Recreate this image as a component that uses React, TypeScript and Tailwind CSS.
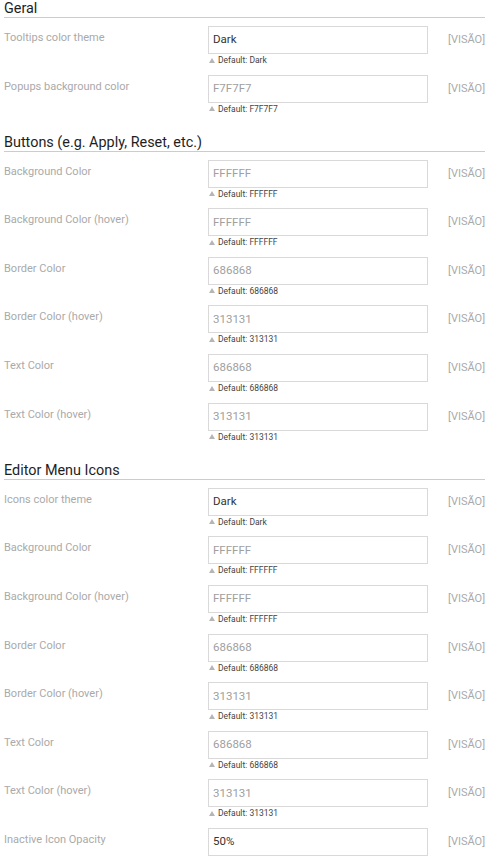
type Field = {
  label: string
  value: string
  def?: string
  dark?: boolean
}

type Section = {
  title: string
  fields: Field[]
}

const sections: Section[] = [
  {
    title: 'Geral',
    fields: [
      { label: 'Tooltips color theme', value: 'Dark', def: 'Dark', dark: true },
      { label: 'Popups background color', value: 'F7F7F7', def: 'F7F7F7' },
    ],
  },
  {
    title: 'Buttons (e.g. Apply, Reset, etc.)',
    fields: [
      { label: 'Background Color', value: 'FFFFFF', def: 'FFFFFF' },
      { label: 'Background Color (hover)', value: 'FFFFFF', def: 'FFFFFF' },
      { label: 'Border Color', value: '686868', def: '686868' },
      { label: 'Border Color (hover)', value: '313131', def: '313131' },
      { label: 'Text Color', value: '686868', def: '686868' },
      { label: 'Text Color (hover)', value: '313131', def: '313131' },
    ],
  },
  {
    title: 'Editor Menu Icons',
    fields: [
      { label: 'Icons color theme', value: 'Dark', def: 'Dark', dark: true },
      { label: 'Background Color', value: 'FFFFFF', def: 'FFFFFF' },
      { label: 'Background Color (hover)', value: 'FFFFFF', def: 'FFFFFF' },
      { label: 'Border Color', value: '686868', def: '686868' },
      { label: 'Border Color (hover)', value: '313131', def: '313131' },
      { label: 'Text Color', value: '686868', def: '686868' },
      { label: 'Text Color (hover)', value: '313131', def: '313131' },
      { label: 'Inactive Icon Opacity', value: '50%', dark: true },
    ],
  },
]

function Row({ field }: { field: Field }) {
  return (
    <div className="flex h-[48.6px] items-start">
      <div className="w-[204px] shrink-0 pt-[4px] text-[11px] leading-[16px] text-[#aaaaaa]">
        {field.label}
      </div>
      <div className="w-[220px] shrink-0">
        <div
          className={`flex h-[28px] items-center border border-[#d9d9d9] bg-white px-[4px] text-[11.5px] ${
            field.dark ? 'text-[#333333]' : 'text-[#a0a0a0]'
          }`}
        >
          {field.value}
        </div>
        {field.def && (
          <div className="flex items-center text-[8.5px] leading-[12px] text-[#444444]">
            <svg width="6" height="5" viewBox="0 0 6 5" className="ml-[1px] mr-[3px]">
              <path d="M3 0 L6 5 L0 5 Z" fill="#b5b5b5" />
            </svg>
            Default: {field.def}
          </div>
        )}
      </div>
      <div className="ml-[20px] pt-[6px] text-[11px] leading-[16px] text-[#aaaaaa]">[VISÃO]</div>
    </div>
  )
}

export default function App() {
  return (
    <div className="min-h-screen w-[489px] bg-white px-[4px] font-['Roboto',sans-serif]">
      {sections.map((s, i) => (
        <div key={s.title} className={i === 0 ? '' : 'mt-[10.5px]'}>
          <h2 className="mb-[8px] border-b border-[#cccccc] pb-0 text-[14.4px] leading-[17px] text-[#1e1e1e]">
            {s.title}
          </h2>
          {s.fields.map((f) => (
            <Row key={f.label} field={f} />
          ))}
        </div>
      ))}
    </div>
  )
}
